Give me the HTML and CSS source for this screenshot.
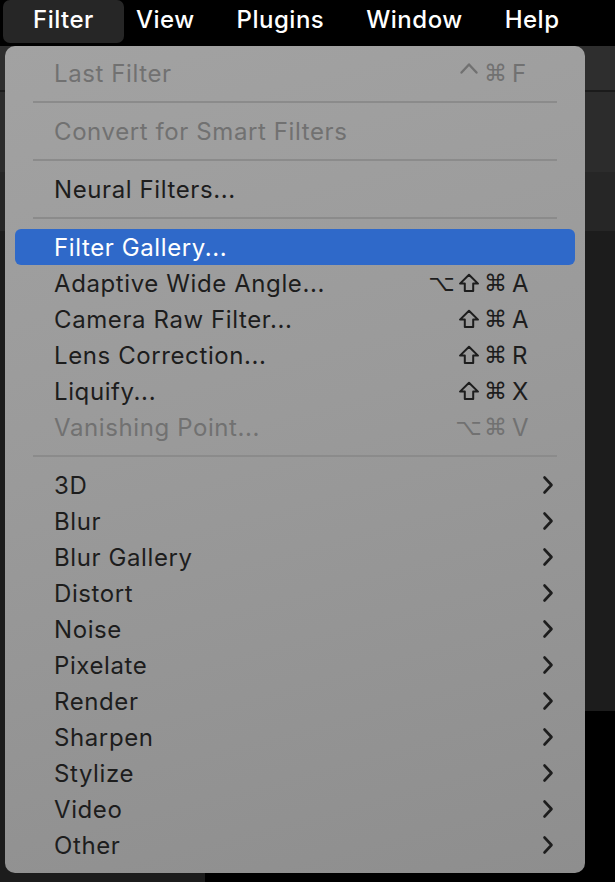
FILE: index.html
```html
<!DOCTYPE html>
<html lang="en">
<head>
<meta charset="utf-8">
<title>Filter menu</title>
<link rel="stylesheet" href="styles.css">
</head>
<body>
<div class="screen">
  <nav class="menubar">
    <span class="mb-item active">Filter</span>
    <span class="mb-item">View</span>
    <span class="mb-item">Plugins</span>
    <span class="mb-item">Window</span>
    <span class="mb-item">Help</span>
  </nav>
  <div class="workspace">
    <div class="band b1"></div>
    <div class="band b2"></div>
    <div class="band b3"></div>
    <div class="band b4"></div>
    <div class="band b5"><div class="dock"></div></div>
  </div>

  <div class="menu">
    <div class="row disabled"><span class="label">Last Filter</span><span class="sc"><span class="mod"><svg class="ico-ctrl" viewBox="0 0 20 20"><path d="M2.5 11.5 L10 3.5 L17.5 11.5"/></svg></span><span class="mod">⌘</span><span class="key">F</span></span></div>
    <div class="sep"></div>
    <div class="row disabled"><span class="label">Convert for Smart Filters</span></div>
    <div class="sep"></div>
    <div class="row"><span class="label">Neural Filters...</span></div>
    <div class="sep"></div>
    <div class="row selected"><span class="label">Filter Gallery...</span></div>
    <div class="row"><span class="label">Adaptive Wide Angle...</span><span class="sc"><span class="mod">⌥</span><span class="mod"><svg class="ico-shift" viewBox="0 0 22 20"><path d="M11 1.8 L20 10.6 L15.2 10.6 L15.2 18 L6.8 18 L6.8 10.6 L2 10.6 Z"/></svg></span><span class="mod">⌘</span><span class="key">A</span></span></div>
    <div class="row"><span class="label">Camera Raw Filter...</span><span class="sc"><span class="mod"><svg class="ico-shift" viewBox="0 0 22 20"><path d="M11 1.8 L20 10.6 L15.2 10.6 L15.2 18 L6.8 18 L6.8 10.6 L2 10.6 Z"/></svg></span><span class="mod">⌘</span><span class="key">A</span></span></div>
    <div class="row"><span class="label">Lens Correction...</span><span class="sc"><span class="mod"><svg class="ico-shift" viewBox="0 0 22 20"><path d="M11 1.8 L20 10.6 L15.2 10.6 L15.2 18 L6.8 18 L6.8 10.6 L2 10.6 Z"/></svg></span><span class="mod">⌘</span><span class="key">R</span></span></div>
    <div class="row"><span class="label">Liquify...</span><span class="sc"><span class="mod"><svg class="ico-shift" viewBox="0 0 22 20"><path d="M11 1.8 L20 10.6 L15.2 10.6 L15.2 18 L6.8 18 L6.8 10.6 L2 10.6 Z"/></svg></span><span class="mod">⌘</span><span class="key">X</span></span></div>
    <div class="row disabled"><span class="label">Vanishing Point...</span><span class="sc"><span class="mod">⌥</span><span class="mod">⌘</span><span class="key">V</span></span></div>
    <div class="sep"></div>
    <div class="row"><span class="label">3D</span><svg class="chev" viewBox="0 0 12 20"><path d="M2.5 2.5 L9.5 10 L2.5 17.5"/></svg></div>
    <div class="row"><span class="label">Blur</span><svg class="chev" viewBox="0 0 12 20"><path d="M2.5 2.5 L9.5 10 L2.5 17.5"/></svg></div>
    <div class="row"><span class="label">Blur Gallery</span><svg class="chev" viewBox="0 0 12 20"><path d="M2.5 2.5 L9.5 10 L2.5 17.5"/></svg></div>
    <div class="row"><span class="label">Distort</span><svg class="chev" viewBox="0 0 12 20"><path d="M2.5 2.5 L9.5 10 L2.5 17.5"/></svg></div>
    <div class="row"><span class="label">Noise</span><svg class="chev" viewBox="0 0 12 20"><path d="M2.5 2.5 L9.5 10 L2.5 17.5"/></svg></div>
    <div class="row"><span class="label">Pixelate</span><svg class="chev" viewBox="0 0 12 20"><path d="M2.5 2.5 L9.5 10 L2.5 17.5"/></svg></div>
    <div class="row"><span class="label">Render</span><svg class="chev" viewBox="0 0 12 20"><path d="M2.5 2.5 L9.5 10 L2.5 17.5"/></svg></div>
    <div class="row"><span class="label">Sharpen</span><svg class="chev" viewBox="0 0 12 20"><path d="M2.5 2.5 L9.5 10 L2.5 17.5"/></svg></div>
    <div class="row"><span class="label">Stylize</span><svg class="chev" viewBox="0 0 12 20"><path d="M2.5 2.5 L9.5 10 L2.5 17.5"/></svg></div>
    <div class="row"><span class="label">Video</span><svg class="chev" viewBox="0 0 12 20"><path d="M2.5 2.5 L9.5 10 L2.5 17.5"/></svg></div>
    <div class="row"><span class="label">Other</span><svg class="chev" viewBox="0 0 12 20"><path d="M2.5 2.5 L9.5 10 L2.5 17.5"/></svg></div>
  </div>
</div>
</body>
</html>
```

FILE: styles.css
```css
* { box-sizing: border-box; }
html, body { margin: 0; padding: 0; }
body {
  width: 615px;
  height: 882px;
  overflow: hidden;
  background: #000;
  font-family: Inter, "Noto Sans", "Liberation Sans", sans-serif;
}
.screen {
  position: relative;
  width: 615px;
  height: 882px;
  display: flex;
  flex-direction: column;
}
.menubar {
  height: 46px;
  flex: none;
  background: #000;
  display: flex;
  align-items: flex-start;
  padding-left: 3px;
}
.mb-item {
  height: 43px;
  line-height: 40px;
  padding: 0 21px;
  color: #fff;
  font-size: 24px;
  font-weight: 500;
  letter-spacing: 0.5px;
  border-radius: 7px;
}
.mb-item.active {
  padding: 0 30px;
  margin-right: -9px;
  background: #262626;
}
.workspace {
  flex: 1;
  display: flex;
  flex-direction: column;
}
.band { flex: none; }
.b1 { height: 46px; background: #2e2e2e; border-bottom: 2px solid #1b1b1b; }
.b2 { height: 80px; background: #2c2c2c; }
.b3 { height: 59px; background: #262626; }
.b4 { height: 480px; background: #1c1c1c; }
.b5 { flex: 1; background: #000; display: flex; }
.dock { width: 205px; background: #1c1c1c; }

.menu {
  position: absolute;
  left: 5px;
  top: 46px;
  width: 580px;
  height: 827px;
  border-radius: 10px;
  padding: 9px 0 10px;
  background: linear-gradient(165deg, #a2a2a2 0%, #9a9a9a 45%, #8e8e8e 100%);
  display: flex;
  flex-direction: column;
}
.row {
  height: 36px;
  margin: 0 10px;
  padding: 0 22px 0 39px;
  display: flex;
  align-items: center;
  font-size: 24px;
  letter-spacing: 0.6px;
  color: #1d1d1d;
  border-radius: 6px;
}
.row .label { flex: 1; white-space: nowrap; }
.row.disabled { color: #717171; }
.row.selected { background: #2f69c9; color: #fff; }
.sep {
  height: 2px;
  margin: 10px 28px;
  background: #8b8b8b;
  flex: none;
}
.sc { display: flex; align-items: center; }
.mod {
  width: 27px;
  height: 36px;
  display: flex;
  align-items: center;
  justify-content: center;
  font-family: "DejaVu Sans", sans-serif;
  font-size: 23px;
  letter-spacing: 0;
}
.ico-shift {
  width: 22px;
  height: 20px;
  fill: none;
  stroke: currentColor;
  stroke-width: 2;
  stroke-linejoin: round;
}
.ico-ctrl {
  width: 20px;
  height: 20px;
  margin-top: -4px;
  fill: none;
  stroke: currentColor;
  stroke-width: 2.4;
  stroke-linecap: round;
  stroke-linejoin: round;
}
.key {
  width: 44px;
  padding-left: 3px;
}
.chev {
  width: 12px;
  height: 20px;
  margin-right: -1px;
  fill: none;
  stroke: #1d1d1d;
  stroke-width: 2.6;
  stroke-linecap: round;
  stroke-linejoin: round;
}
```
